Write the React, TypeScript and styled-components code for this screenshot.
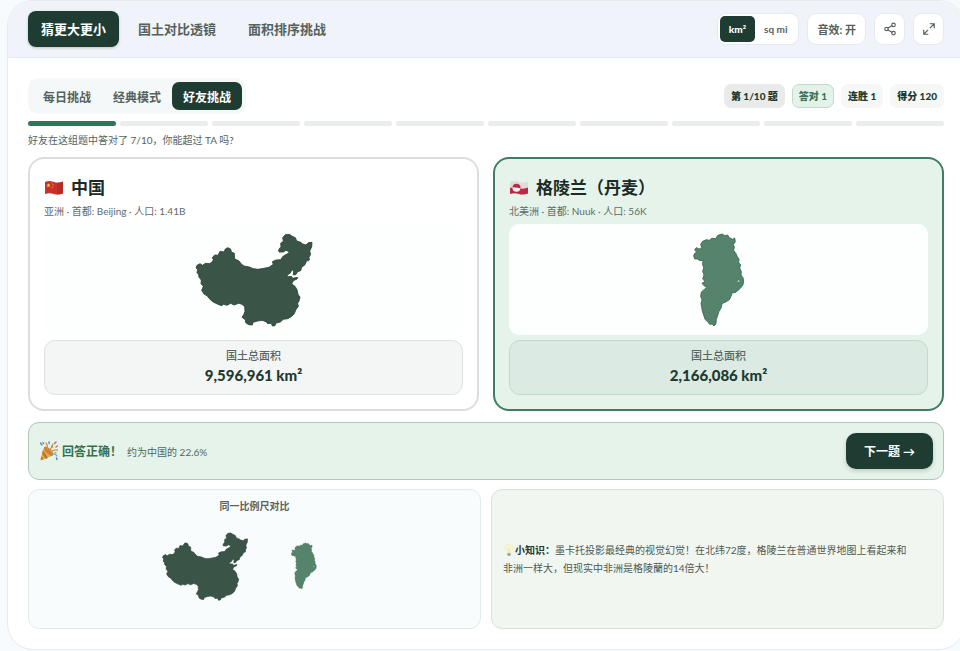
import React from "react";
import styled, { createGlobalStyle, css } from "styled-components";
import { Share2 } from "lucide-react";

const GlobalStyle = createGlobalStyle`
  * { box-sizing: border-box; }
  html { overflow-x: hidden; }
  body {
    margin: 0;
    background: #f8fbfd;
    color: #1c2b26;
    font-family: Lato, "Noto Sans CJK SC", sans-serif;
    font-size: 10px;
    line-height: 16px;
    overflow-x: hidden;
  }
  button { font-family: inherit; cursor: pointer; }
  h2, h3, p, dl, dd { margin: 0; }
  svg { display: block; flex: none; }
`;

const Panel = styled.main`
  margin: 0 -5px 0 7px;
  background: #fefffe;
  border: 1px solid #e6ebee;
  border-radius: 26px;
  overflow: hidden;
`;

const Header = styled.header`
  display: flex;
  align-items: center;
  justify-content: space-between;
  padding: 10px 20px;
  background: #f0f4fa;
  border-bottom: 1px solid #e4e9ed;
`;

const Nav = styled.nav`
  display: flex;
  gap: 6px;
`;

const activeFill = css`
  background: #1f3c32;
  color: #fff;
`;

const NavButton = styled.button<{ $active?: boolean }>`
  height: 36px;
  padding: 0 13px 2px;
  border: 0;
  border-radius: 8px;
  background: transparent;
  color: #56615e;
  font-size: 13px;
  font-weight: 700;
  ${(p) => p.$active && activeFill}
  ${(p) => p.$active && "box-shadow: 0 1px 3px rgba(31, 60, 50, 0.25);"}
`;

const Tools = styled.div`
  display: flex;
  align-items: center;
  gap: 8px;
`;

const UnitSwitch = styled.div`
  display: flex;
  height: 32px;
  padding: 2px;
  background: #fff;
  border: 1px solid #e6eaee;
  border-radius: 9px;
`;

const UnitButton = styled.button<{ $active?: boolean }>`
  padding: 0 9px;
  border: 0;
  border-radius: 5px;
  background: transparent;
  color: #59635f;
  font-size: 10px;
  font-weight: 700;
  ${(p) => p.$active && activeFill}
  ${(p) => p.$active && "font-weight: 900;"}
`;

const ToolButton = styled.button<{ $square?: boolean }>`
  display: flex;
  align-items: center;
  justify-content: center;
  height: 32px;
  width: ${(p) => (p.$square ? "31px" : "auto")};
  padding: ${(p) => (p.$square ? "0" : "0 9px")};
  background: #fff;
  border: 1px solid #e6eaee;
  border-radius: 9px;
  color: #56615e;
  font-size: 11px;
  font-weight: 700;
`;

const Body = styled.div`
  padding: 20px;
`;

const ModeRow = styled.div`
  display: flex;
  align-items: center;
  justify-content: space-between;
`;

const Modes = styled.div`
  display: flex;
  padding: 4px;
  border-radius: 10px;
  background: #f5f8f9;
`;

const ModeButton = styled.button<{ $active?: boolean }>`
  height: 28px;
  padding: 0 11px;
  border: 0;
  border-radius: 7px;
  background: transparent;
  color: #56615e;
  font-size: 12px;
  font-weight: 700;
  ${(p) => p.$active && activeFill}
`;

const Chips = styled.div`
  display: flex;
  gap: 7px;
`;

const Chip = styled.span<{ $tone?: "grey" | "green" }>`
  padding: 3px 6px;
  border: 1px solid ${(p) => (p.$tone === "green" ? "#c0d9cb" : "transparent")};
  border-radius: 7px;
  background: ${(p) =>
    p.$tone === "green" ? "#e4f3ea" : p.$tone === "grey" ? "#e9ebeb" : "#f6f8f7"};
  color: ${(p) => (p.$tone === "green" ? "#397258" : "#20392f")};
  font-size: 10px;
  font-weight: 900;
`;

const Progress = styled.div`
  display: grid;
  grid-template-columns: repeat(10, 1fr);
  gap: 4px;
  margin-top: 7px;
`;

const Segment = styled.span<{ $done: boolean }>`
  height: 5px;
  border-radius: 3px;
  background: ${(p) => (p.$done ? "#347558" : "#ebecec")};
`;

const Hint = styled.p`
  margin-top: 6px;
  color: #56625e;
`;

const Cards = styled.div`
  display: grid;
  grid-template-columns: 1fr 1fr;
  gap: 14px;
  margin-top: 9px;
`;

const Card = styled.article<{ $picked?: boolean }>`
  padding: 14px;
  border: 2px solid ${(p) => (p.$picked ? "#417d63" : "#dadedd")};
  border-radius: 16px;
  background: ${(p) => (p.$picked ? "#e5f3ea" : "#fff")};
`;

const CardTitle = styled.h2`
  display: flex;
  align-items: center;
  gap: 7px;
  font-size: 17px;
  line-height: 30px;
  font-weight: 700;
`;

const Meta = styled.p`
  color: #5f6b67;
`;

const MapBox = styled.div`
  display: flex;
  align-items: center;
  justify-content: center;
  height: 111px;
  margin-top: 5px;
  border-radius: 10px;
  background: #fdfffe;
`;

const Stat = styled.dl<{ $picked?: boolean }>`
  margin-top: 5px;
  padding: 7px 0;
  border: 1px solid ${(p) => (p.$picked ? "#c5d8ce" : "#dde2e1")};
  border-radius: 11px;
  background: ${(p) => (p.$picked ? "#dbeae3" : "#f4f6f6")};
  text-align: center;
`;

const StatLabel = styled.dt`
  color: #5a6662;
  font-size: 11px;
  font-weight: 500;
`;

const StatValue = styled.dd`
  color: #20392f;
  font-size: 15px;
  line-height: 23px;
  font-weight: 900;
`;

const Result = styled.section`
  display: flex;
  align-items: center;
  margin-top: 11px;
  padding: 10px;
  border: 1px solid #adc8ba;
  border-radius: 11px;
  background: #e5f3ea;
`;

const Verdict = styled.strong`
  padding-top: 2px;
  margin-left: 3px;
  color: #36704f;
  font-size: 12px;
`;

const Ratio = styled.span`
  flex: 1;
  padding-top: 2px;
  margin-left: 5px;
  color: #52675c;
`;

const NextButton = styled.button`
  height: 36px;
  padding: 0 18px 2px;
  border: 0;
  border-radius: 10px;
  box-shadow: 0 2px 4px rgba(31, 60, 50, 0.2);
  font-size: 12px;
  font-weight: 700;
  ${activeFill}
`;

const Details = styled.div`
  display: grid;
  grid-template-columns: 1fr 1fr;
  grid-auto-rows: 140px;
  gap: 10px;
  margin-top: 9px;
`;

const Scale = styled.section`
  padding: 8px;
  border: 1px solid #e3eaec;
  border-radius: 11px;
  background: #f9fcfd;
`;

const ScaleTitle = styled.h3`
  color: #59635f;
  font-size: 10px;
  font-weight: 700;
  text-align: center;
`;

const ScaleShapes = styled.div`
  display: flex;
  align-items: center;
  justify-content: center;
  gap: 43px;
  height: 104px;
  padding-right: 30px;
`;

const Fact = styled.section`
  display: flex;
  align-items: center;
  padding: 11px;
  border: 1px solid #d9e3dc;
  border-radius: 11px;
  background: #f1f6f1;
  color: #4d5a54;
`;

const FactText = styled.p`
  line-height: 18px;
  strong { color: #20392f; }
  svg { display: inline-block; vertical-align: -3px; }
`;

function ChinaShape({ width, height }: { width: number; height: number }) {
  return (
    <svg width={width} height={height} viewBox="30 18 352 282" role="img" aria-label="中国">
      <path
        d="M35 115L44 110L52 115L60 109L72 110L80 106L84 98L81 92L88 84L98 85L104 73L116 75L120 66L127 62L136 66L138 75L147 79L148 96L160 101L169 112L176 117L192 120L203 125L218 127L236 124L251 121L264 112L261 104L272 99L286 98L294 87L304 82L313 75L302 70L294 75L281 75L280 68L287 59L286 49L294 43L292 32L300 23L312 22L321 28L330 32L334 42L346 46L352 51L362 54L369 47L380 46L379 60L373 72L376 82L371 91L372 99L363 103L359 113L349 121L346 131L337 134L331 143L324 144L325 132L320 128L315 138L305 145L309 149L318 148L322 154L337 151L335 156L324 161L319 171L329 178L335 188L338 202L344 211L341 222L337 229L339 238L331 249L327 260L318 269L307 275L294 277L285 285L272 288L269 296L261 297L258 289L247 290L242 284L230 280L217 282L203 286L201 294L190 293L181 287L180 278L170 271L175 263L179 253L178 239L170 232L160 229L146 234L136 229L125 235L115 232L108 236L94 230L82 224L72 215L66 207L56 201L49 190L54 178L47 170L48 159L41 151L40 143L35 137L37 127L32 123Z"
        fill="#3a5448" stroke="#264135" strokeWidth="2.5" strokeLinejoin="round"
      />
    </svg>
  );
}

function GreenlandShape({ width, height }: { width: number; height: number }) {
  return (
    <svg width={width} height={height} viewBox="38 20 156 282" role="img" aria-label="格陵兰">
      <path
        d="M43 81L49 78L43 70L48 64L57 68L64 64L61 54L67 45L78 40L87 42L94 36L106 37L112 27L126 23L133 28L142 26L147 34L157 39L163 35L165 46L159 55L162 62L160 72L167 82L171 91L176 98L175 108L181 116L178 125L183 136L182 146L188 154L190 164L188 175L180 186L172 193L164 199L156 199L152 210L147 220L138 226L129 230L124 235L122 246L116 255L112 268L108 279L107 292L101 299L96 293L88 294L82 286L74 279L70 266L66 255L64 243L62 231L65 221L61 210L63 197L71 190L79 184L70 177L65 171L74 165L67 158L71 146L67 135L70 124L66 112L69 103L59 103L51 98L43 98L40 88Z"
        fill="#56836c" stroke="#39634e" strokeWidth="2.5" strokeLinejoin="round"
      />
      <path d="M169 166l7-6 3 7z" fill="#dceae2" stroke="#39634e" />
    </svg>
  );
}

const ExpandIcon = () => (
  <svg
    width="14" height="14" viewBox="0 0 24 24" fill="none" stroke="currentColor"
    strokeWidth="2" strokeLinecap="round" strokeLinejoin="round" aria-hidden="true"
  >
    <path d="M14 3h7v7M21 3l-7 7M10 21H3v-7M3 21l7-7" />
  </svg>
);

const ChinaFlag = () => (
  <svg width="20" height="16" viewBox="0 0 20 16" aria-hidden="true">
    <path d="M1 2C4 .6 7 1 10 2s6 .8 9-.5v12c-3 1.200-6 1.500-9 .5s-6-1.200-9 0z" fill="#c9302b" />
    <path d="M13 2.500c2 0 4-.2 6-1v12c-2 .8-4 1-6 1z" fill="#a92623" opacity=".5" />
    <path d="m4.500 3.200.6 1.400 1.500.1-1.200 1 .4 1.500-1.300-.8-1.300.8.400-1.500-1.200-1 1.500-.1z" fill="#f8c94a" />
    <g fill="#efb441"><circle cx="8" cy="3" r=".5" /><circle cx="9" cy="4.500" r=".5" /><circle cx="9" cy="6.300" r=".5" /><circle cx="7.800" cy="7.700" r=".5" /></g>
  </svg>
);

const GreenlandFlag = () => (
  <svg width="20" height="16" viewBox="0 0 20 16" aria-hidden="true">
    <path d="M1 2C4 .6 7 1 10 2s6 .8 9-.5v12c-3 1.200-6 1.500-9 .5s-6-1.200-9 0z" fill="#e0dcdc" />
    <path d="M1 8c3-1.200 6-1 9 0s6 .8 9-.5v6c-3 1.200-6 1.500-9 .5s-6-1.200-9 0z" fill="#bd2944" />
    <path d="M3.500 7.300a4 4 0 0 1 8 1z" fill="#bd2944" />
    <path d="M3.500 7.300a4 4 0 0 0 8 1z" fill="#f4eeee" />
  </svg>
);

const Party = () => (
  <svg width="20" height="20" viewBox="0 0 20 20" aria-hidden="true">
    <path d="M5 6 1.500 18.200c-.2.800.4 1.200 1.200.9L14 14.500z" fill="#e9ad45" />
    <path d="m4 9 5 8-2.500 1L3 12.500zM2.300 15l2.200 3.500-1.500.5-1.200-1z" fill="#b87932" />
    <ellipse cx="9.700" cy="10.200" rx="2.600" ry="6" transform="rotate(-46 9.700 10.200)" fill="#c98335" />
    <path d="M8 9c1-3 .5-5-1-7M11 10c.5-3 2-4 3-7M12 11c2-2 4-2.500 6.500-2" fill="none" stroke="#dd8f4a" strokeWidth="1.300" strokeLinecap="round" />
    <path d="M13 13c2-.5 4 0 5 2" fill="none" stroke="#75a4c8" strokeWidth="1.200" strokeLinecap="round" />
    <path d="m1.500 2 1.500 2M17.500 17l.5 1.500M10 1l.3 1.500" stroke="#5789c4" strokeWidth="1.400" strokeLinecap="round" />
    <path d="m17 1-1.500 1.500M18.500 5l-1.500 1M4 1.500l.5 1" stroke="#d2605f" strokeWidth="1.400" strokeLinecap="round" />
    <path d="m13 5 .8 1M16 11.500l1 .3" stroke="#78ad69" strokeWidth="1.300" strokeLinecap="round" />
  </svg>
);

const Bulb = () => (
  <svg width="12" height="14" viewBox="0 0 12 14" aria-hidden="true">
    <path d="M6 1C3.400 1 1.700 2.900 1.700 5c0 2.200 2 3 2.500 5h3.600c.5-2 2.500-2.800 2.500-5C10.300 2.900 8.600 1 6 1z" fill="#f6f5d2" stroke="#e9e9c4" strokeWidth=".6" />
    <path d="M4.800 6 6 7l1.200-1M6 7v3" fill="none" stroke="#dfd795" strokeWidth=".6" />
    <path d="M4.300 10.300h3.400v1.800L6.700 13H5.300l-1-.9z" fill="#98a198" />
  </svg>
);

interface Country {
  name: string;
  meta: string;
  area: string;
  flag: React.ReactNode;
  shape: React.ReactNode;
  picked?: boolean;
}

const countries: Country[] = [
  {
    name: "中国",
    meta: "亚洲 · 首都: Beijing · 人口: 1.41B",
    area: "9,596,961 km²",
    flag: <ChinaFlag />,
    shape: <ChinaShape width={118} height={94} />,
  },
  {
    name: "格陵兰（丹麦）",
    meta: "北美洲 · 首都: Nuuk · 人口: 56K",
    area: "2,166,086 km²",
    flag: <GreenlandFlag />,
    shape: <GreenlandShape width={52} height={94} />,
    picked: true,
  },
];

export default function App() {
  return (
    <>
      <GlobalStyle />
      <Panel>
        <Header>
          <Nav>
            <NavButton $active>猜更大更小</NavButton>
            <NavButton>国土对比透镜</NavButton>
            <NavButton>面积排序挑战</NavButton>
          </Nav>
          <Tools>
            <UnitSwitch>
              <UnitButton $active>km²</UnitButton>
              <UnitButton>sq mi</UnitButton>
            </UnitSwitch>
            <ToolButton>音效: 开</ToolButton>
            <ToolButton $square aria-label="分享"><Share2 size={14} /></ToolButton>
            <ToolButton $square aria-label="全屏"><ExpandIcon /></ToolButton>
          </Tools>
        </Header>
        <Body>
          <ModeRow>
            <Modes>
              <ModeButton>每日挑战</ModeButton>
              <ModeButton>经典模式</ModeButton>
              <ModeButton $active>好友挑战</ModeButton>
            </Modes>
            <Chips>
              <Chip $tone="grey">第 1/10 题</Chip>
              <Chip $tone="green">答对 1</Chip>
              <Chip>连胜 1</Chip>
              <Chip>得分 120</Chip>
            </Chips>
          </ModeRow>
          <Progress>
            {Array.from({ length: 10 }, (_, i) => (
              <Segment key={i} $done={i === 0} />
            ))}
          </Progress>
          <Hint>好友在这组题中答对了 7/10，你能超过 TA 吗?</Hint>
          <Cards>
            {countries.map((c) => (
              <Card key={c.name} $picked={c.picked}>
                <CardTitle>{c.flag}{c.name}</CardTitle>
                <Meta>{c.meta}</Meta>
                <MapBox>{c.shape}</MapBox>
                <Stat $picked={c.picked}>
                  <StatLabel>国土总面积</StatLabel>
                  <StatValue>{c.area}</StatValue>
                </Stat>
              </Card>
            ))}
          </Cards>
          <Result>
            <Party />
            <Verdict>回答正确！</Verdict>
            <Ratio>约为中国的 22.6%</Ratio>
            <NextButton>下一题 →</NextButton>
          </Result>
          <Details>
            <Scale>
              <ScaleTitle>同一比例尺对比</ScaleTitle>
              <ScaleShapes>
                <ChinaShape width={86} height={69} />
                <GreenlandShape width={26} height={48} />
              </ScaleShapes>
            </Scale>
            <Fact>
              <FactText>
                <Bulb />
                <strong>小知识：</strong>
                墨卡托投影最经典的视觉幻觉！在北纬72度，格陵兰在普通世界地图上看起来和
                <br />
                非洲一样大，但现实中非洲是格陵蘭的14倍大！
              </FactText>
            </Fact>
          </Details>
        </Body>
      </Panel>
    </>
  );
}
